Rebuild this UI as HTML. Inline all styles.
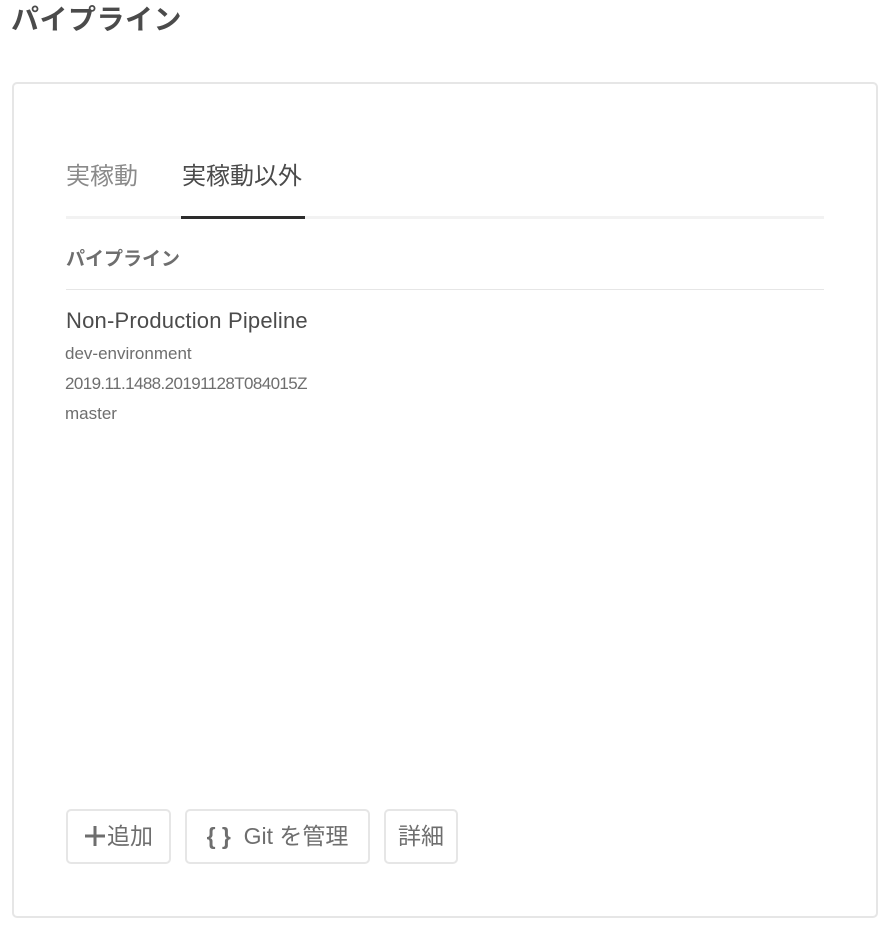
<!DOCTYPE html>
<html><head><meta charset="utf-8"><style>
body{margin:0;width:894px;height:930px;background:#fff;font-family:"Liberation Sans","Noto Sans CJK JP",sans-serif;color:#4b4b4b;position:relative;overflow:hidden}
.a{position:absolute;white-space:nowrap}
h1{position:absolute;left:11px;top:2px;margin:0;font-size:28px;font-weight:bold;color:#4b4b4b;line-height:36px;letter-spacing:0.5px}
.card{position:absolute;left:12px;top:82px;width:866px;height:836px;border:2px solid #e6e6e6;border-radius:5px;box-sizing:border-box}
.btn{position:absolute;top:809px;height:55px;border:2px solid #e6e6e6;border-radius:5px;box-sizing:border-box;font-size:23px;color:#6e6e6e;line-height:51px;text-align:center}
</style></head><body>
<h1>パイプライン</h1>
<div class="card"></div>
<div class="a" style="left:66px;top:160px;font-size:24px;color:#8a8a8a;line-height:34px">実稼動</div>
<div class="a" style="left:182px;top:160px;font-size:24px;color:#4b4b4b;line-height:34px">実稼動以外</div>
<div class="a" style="left:66px;top:216px;width:758px;height:3px;background:#f2f2f2"></div>
<div class="a" style="left:181px;top:216px;width:124px;height:3px;background:#2c2c2c"></div>
<div class="a" style="left:66px;top:246px;font-size:19px;font-weight:bold;color:#6e6e6e;line-height:28px">パイプライン</div>
<div class="a" style="left:66px;top:289px;width:758px;height:1px;background:#e6e6e6"></div>
<div class="a" style="left:66px;top:306px;font-size:22px;color:#4b4b4b;line-height:30px;letter-spacing:0.2px">Non-Production Pipeline</div>
<div class="a" style="left:65px;top:343px;font-size:17px;color:#6e6e6e;line-height:22px">dev-environment</div>
<div class="a" style="left:65px;top:373px;font-size:17px;color:#6e6e6e;line-height:22px;letter-spacing:-0.6px">2019.11.1488.20191128T084015Z</div>
<div class="a" style="left:65px;top:403px;font-size:17px;color:#6e6e6e;line-height:22px">master</div>
<div class="btn" style="left:66px;width:105px"><svg width="22" height="22" viewBox="0 0 22 22" style="vertical-align:-3px;margin-right:1px"><path d="M11 1V21M1 11H21" stroke="#6e6e6e" stroke-width="3"/></svg>追加</div>
<div class="btn" style="left:185px;width:185px"><span style="font-weight:bold;color:#6e6e6e">{ }</span>&nbsp; Git を管理</div>
<div class="btn" style="left:384px;width:74px">詳細</div>
</body></html>
